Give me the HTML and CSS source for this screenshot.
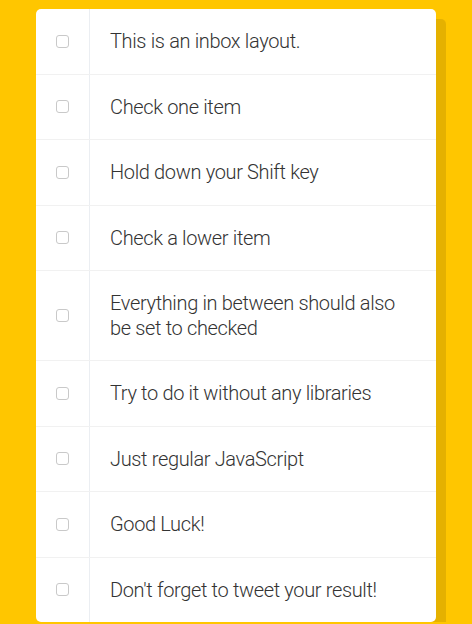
FILE: index.html
```html
<!DOCTYPE html>
<html>
<head>
<meta charset="utf-8">
<link rel="stylesheet" href="styles.css">
</head>
<body>
<div class="inbox">
  <div class="item"><input type="checkbox"><p>This is an inbox layout.</p></div>
  <div class="item"><input type="checkbox"><p>Check one item</p></div>
  <div class="item"><input type="checkbox"><p>Hold down your Shift key</p></div>
  <div class="item"><input type="checkbox"><p>Check a lower item</p></div>
  <div class="item"><input type="checkbox"><p>Everything in between should also be set to checked</p></div>
  <div class="item"><input type="checkbox"><p>Try to do it without any libraries</p></div>
  <div class="item"><input type="checkbox"><p>Just regular JavaScript</p></div>
  <div class="item"><input type="checkbox"><p>Good Luck!</p></div>
  <div class="item"><input type="checkbox"><p>Don't forget to tweet your result!</p></div>
</div>
</body>
</html>
```
FILE: styles.css
```css
html {
  background: #ffc600;
  font-family: Roboto, "Liberation Sans", sans-serif;
}
body {
  margin: 0;
  padding: 9px 0 0;
}
.inbox {
  width: 400px;
  margin: 0 auto;
  background: #fff;
  border-radius: 5px;
  box-shadow: 10px 10px 0 rgba(0,0,0,0.1);
}
.item {
  display: flex;
  align-items: center;
  border-bottom: 1px solid #f1f1f1;
}
.item:last-child {
  border-bottom: 0;
}
.item input[type="checkbox"] {
  appearance: none;
  -webkit-appearance: none;
  width: 13px;
  height: 13px;
  margin: 20px;
  border: 1px solid #c9c9c9;
  border-radius: 3px;
  background: #fff;
  box-sizing: border-box;
  flex: none;
}
.item p {
  margin: 0;
  padding: 20px;
  flex: 1;
  font-size: 20px;
  line-height: 24.5px;
  font-weight: 300;
  letter-spacing: -0.35px;
  color: #333;
  border-left: 1px solid #ebeef2;
}
```
